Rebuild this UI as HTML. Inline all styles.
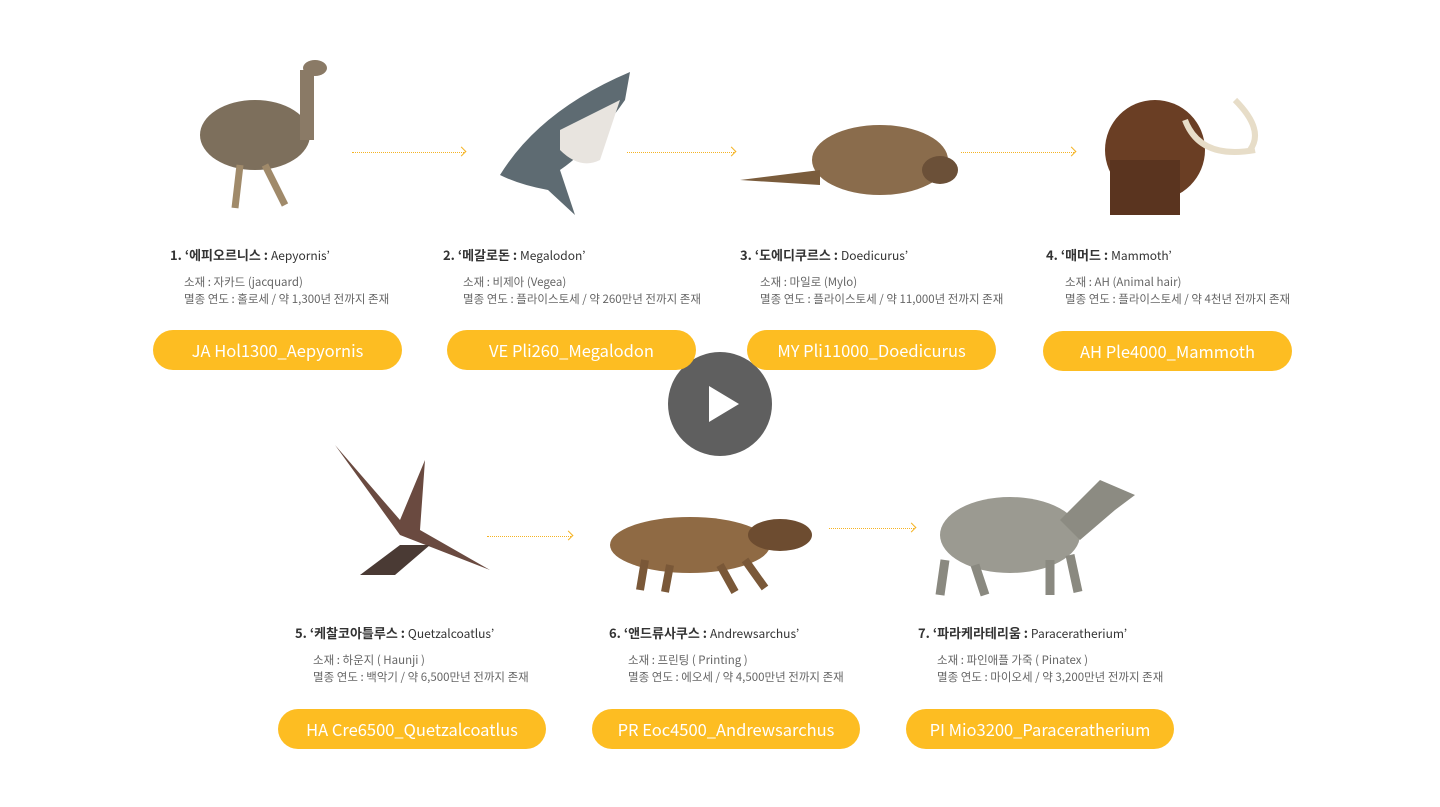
<!DOCTYPE html>
<html><head><meta charset="utf-8"><style>
body{margin:0;width:1440px;height:807px;background:#fff;position:relative;overflow:hidden;font-family:"Noto Sans CJK KR","Liberation Sans",sans-serif;}
.t{position:absolute;font-size:13px;font-weight:bold;color:#333;white-space:nowrap;line-height:18px}
.t span{font-weight:normal;font-size:12px}
.d{position:absolute;font-size:11.5px;color:#666;line-height:17px;white-space:nowrap}
.b{position:absolute;height:40px;border-radius:20px;background:#fdbd22;color:#fff;font-size:16.5px;text-align:center;line-height:40px;white-space:nowrap}
.a{position:absolute;height:0;border-top:1.5px dotted #f5b324}
.a:after{content:"";position:absolute;right:-1px;top:-5px;width:6px;height:6px;border-right:1.5px solid #f5b324;border-top:1.5px solid #f5b324;transform:rotate(45deg)}
svg.an{position:absolute;left:0;top:0}
</style></head><body>
<svg class="an" width="1440" height="807">
<ellipse cx="255" cy="135" rx="55" ry="35" fill="#7d6f5c"/>
<rect x="300" y="70" width="14" height="70" fill="#8a7a66"/>
<ellipse cx="315" cy="68" rx="12" ry="8" fill="#8a7a66"/>
<path d="M240 165 L235 208 M265 165 L285 205" stroke="#a08a6a" stroke-width="7"/>
<path d="M500 175 Q540 110 630 72 L625 100 Q590 150 560 170 L575 215 L548 190 Q520 185 500 175Z" fill="#5e6b72"/>
<path d="M560 130 Q600 110 620 100 L600 160 Q580 170 560 150Z" fill="#e8e4df"/>
<ellipse cx="880" cy="160" rx="68" ry="35" fill="#8a6c4c"/>
<path d="M740 180 L820 170 L820 185Z" fill="#7a5c3c"/>
<ellipse cx="940" cy="170" rx="18" ry="14" fill="#6b5038"/>
<ellipse cx="1155" cy="150" rx="50" ry="50" fill="#6a3e24"/>
<rect x="1110" y="160" width="70" height="55" fill="#5a341f"/>
<path d="M1185 120 Q1200 160 1255 150 M1235 100 Q1265 130 1250 150" stroke="#e7ddc8" stroke-width="6" fill="none"/>
<path d="M335 445 L400 535 L490 570 L420 530 L425 460 L400 520Z" fill="#6a4a40"/>
<path d="M360 575 L400 545 L430 545 L395 575Z" fill="#4a3a34"/>
<ellipse cx="690" cy="545" rx="80" ry="28" fill="#8f6a44"/>
<ellipse cx="780" cy="535" rx="32" ry="16" fill="#6d4c30"/>
<path d="M645 560 L640 590 M670 565 L665 592 M720 565 L735 592 M745 560 L765 588" stroke="#7a5838" stroke-width="8"/>
<ellipse cx="1010" cy="535" rx="70" ry="38" fill="#9b9a91"/>
<path d="M1060 520 L1100 480 L1135 495 L1115 510 L1080 540Z" fill="#8c8b82"/>
<path d="M945 560 L940 595 M975 565 L985 595 M1050 560 L1050 595 M1070 555 L1078 592" stroke="#8a8980" stroke-width="9"/>
<circle cx="720" cy="404" r="52" fill="#5f5f5f"/>
<path d="M709 386 L739 404 L709 422Z" fill="#fff"/>
</svg>
<div class="a" style="left:352px;top:152px;width:112px"></div>
<div class="a" style="left:627px;top:152px;width:107px"></div>
<div class="a" style="left:961px;top:152px;width:113px"></div>
<div class="a" style="left:487px;top:536px;width:84px"></div>
<div class="a" style="left:829px;top:528px;width:85px"></div>

<div class="t" style="left:170px;top:246px">1. ‘에피오르니스 : <span>Aepyornis’</span></div>
<div class="d" style="left:184px;top:274px">소재 : 자카드 (jacquard)<br>멸종 연도 : 홀로세 / 약 1,300년 전까지 존재</div>
<div class="b" style="left:153px;top:330px;width:249px">JA Hol1300_Aepyornis</div>

<div class="t" style="left:443px;top:246px">2. ‘메갈로돈 : <span>Megalodon’</span></div>
<div class="d" style="left:463px;top:274px">소재 : 비제아 (Vegea)<br>멸종 연도 : 플라이스토세 / 약 260만년 전까지 존재</div>
<div class="b" style="left:447px;top:330px;width:249px">VE Pli260_Megalodon</div>

<div class="t" style="left:740px;top:246px">3. ‘도에디쿠르스 : <span>Doedicurus’</span></div>
<div class="d" style="left:760px;top:274px">소재 : 마일로 (Mylo)<br>멸종 연도 : 플라이스토세 / 약 11,000년 전까지 존재</div>
<div class="b" style="left:747px;top:330px;width:249px">MY Pli11000_Doedicurus</div>

<div class="t" style="left:1046px;top:246px">4. ‘매머드 : <span>Mammoth’</span></div>
<div class="d" style="left:1065px;top:274px">소재 : AH (Animal hair)<br>멸종 연도 : 플라이스토세 / 약 4천년 전까지 존재</div>
<div class="b" style="left:1043px;top:331px;width:249px">AH Ple4000_Mammoth</div>

<div class="t" style="left:295px;top:624px">5. ‘케찰코아틀루스 : <span>Quetzalcoatlus’</span></div>
<div class="d" style="left:313px;top:652px">소재 : 하운지 ( Haunji )<br>멸종 연도 : 백악기 / 약 6,500만년 전까지 존재</div>
<div class="b" style="left:278px;top:709px;width:268px">HA Cre6500_Quetzalcoatlus</div>

<div class="t" style="left:609px;top:624px">6. ‘앤드류사쿠스 : <span>Andrewsarchus’</span></div>
<div class="d" style="left:628px;top:652px">소재 : 프린팅 ( Printing )<br>멸종 연도 : 에오세 / 약 4,500만년 전까지 존재</div>
<div class="b" style="left:592px;top:709px;width:268px">PR Eoc4500_Andrewsarchus</div>

<div class="t" style="left:918px;top:624px">7. ‘파라케라테리움 : <span>Paraceratherium’</span></div>
<div class="d" style="left:937px;top:652px">소재 : 파인애플 가죽 ( Pinatex )<br>멸종 연도 : 마이오세 / 약 3,200만년 전까지 존재</div>
<div class="b" style="left:906px;top:709px;width:268px">PI Mio3200_Paraceratherium</div>
</body></html>
